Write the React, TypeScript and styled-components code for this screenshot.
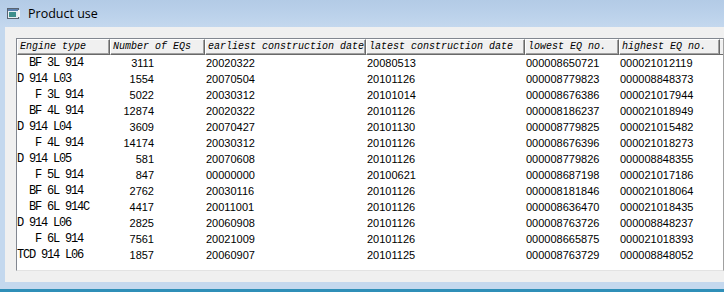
import React from 'react'
import styled, { createGlobalStyle } from 'styled-components'

const GlobalStyle = createGlobalStyle`
  html, body { margin: 0; padding: 0; }
  body { width: 724px; height: 292px; overflow: hidden; background: #c4d8ee; }
`

type Row = [string, string, string, string, string, string]

const columns = [
  { title: 'Engine type', width: 93 },
  { title: 'Number of EQs', width: 95 },
  { title: 'earliest construction date', width: 161 },
  { title: 'latest construction date', width: 159 },
  { title: 'lowest EQ no.', width: 94 },
  { title: 'highest EQ no.', width: 101 },
]

const rows: Row[] = [
  ['  BF 3L 914', '3111', '20020322', '20080513', '000008650721', '000021012119'],
  ['D 914 L03', '1554', '20070504', '20101126', '000008779823', '000008848373'],
  ['   F 3L 914', '5022', '20030312', '20101014', '000008676386', '000021017944'],
  ['  BF 4L 914', '12874', '20020322', '20101126', '000008186237', '000021018949'],
  ['D 914 L04', '3609', '20070427', '20101130', '000008779825', '000021015482'],
  ['   F 4L 914', '14174', '20030312', '20101126', '000008676396', '000021018273'],
  ['D 914 L05', '581', '20070608', '20101126', '000008779826', '000008848355'],
  ['   F 5L 914', '847', '00000000', '20100621', '000008687198', '000021017186'],
  ['  BF 6L 914', '2762', '20030116', '20101126', '000008181846', '000021018064'],
  ['  BF 6L 914C', '4417', '20011001', '20101126', '000008636470', '000021018435'],
  ['D 914 L06', '2825', '20060908', '20101126', '000008763726', '000008848237'],
  ['   F 6L 914', '7561', '20021009', '20101126', '000008665875', '000021018393'],
  ['TCD 914 L06', '1857', '20060907', '20101125', '000008763729', '000008848052'],
]

const gridCols = columns.map((c) => `${c.width}px`).join(' ') + ' 1fr'

export default function App() {
  return (
    <>
      <GlobalStyle />
      <Window>
        <TitleBar>
          <TitleIcon>
            <svg width="13" height="12" viewBox="0 0 13 12">
              <rect x="0.5" y="0.5" width="11" height="10" fill="#e8eef4" stroke="#5a6470" />
              <rect x="1" y="1" width="10" height="2" fill="#5b7fae" />
              <rect x="2" y="4" width="7" height="5" fill="#3f8f8c" />
              <rect x="11" y="2" width="2" height="7" fill="#f4f4f4" />
            </svg>
          </TitleIcon>
          <Title>Product use</Title>
        </TitleBar>
        <Frame>
          <Client>
            <ListBox>
              <HeaderRow>
                {columns.map((c) => (
                  <HeaderCell key={c.title}>{c.title}</HeaderCell>
                ))}
                <HeaderFiller />
              </HeaderRow>
              {rows.map((r) => (
                <DataRow key={r[0]}>
                  <EngineCell>{r[0]}</EngineCell>
                  <CountCell>{r[1]}</CountCell>
                  <Cell>{r[2]}</Cell>
                  <Cell>{r[3]}</Cell>
                  <Cell>{r[4]}</Cell>
                  <Cell>{r[5]}</Cell>
                  <Cell />
                </DataRow>
              ))}
            </ListBox>
          </Client>
        </Frame>
      </Window>
    </>
  )
}

const Window = styled.div`
  width: 724px;
  height: 292px;
  display: flex;
  flex-direction: column;
  background: #c4d8ee;
  border-bottom: 3px solid #2f8fb8;
  box-sizing: border-box;
`

const TitleBar = styled.div`
  height: 27px;
  flex: none;
  display: flex;
  align-items: center;
  gap: 8px;
  padding-left: 7px;
  background: linear-gradient(to bottom, #b3cbe6 0%, #bcd2eb 60%, #c4d8ee 100%);
`

const TitleIcon = styled.div`
  width: 13px;
  height: 12px;
  display: flex;
  margin-top: 1px;
`

const Title = styled.span`
  font-family: 'Open Sans', 'Noto Sans', sans-serif;
  font-size: 12.5px;
  color: #000;
`

const Frame = styled.div`
  flex: 1;
  display: flex;
  padding: 0 0 7px 5px;
  min-height: 0;
`

const Client = styled.div`
  flex: 1;
  background: #f0f0f0;
  padding: 11px 0 11px 11px;
  display: flex;
  min-width: 0;
`

const ListBox = styled.div`
  flex: 1;
  background: #fff;
  border-top: 1px solid #828790;
  border-left: 1px solid #828790;
  border-right: 1px solid #a0a0a0;
  border-bottom: 1px solid #e3e3e3;
  overflow: hidden;
`

const HeaderRow = styled.div`
  display: grid;
  grid-template-columns: ${gridCols};
  height: 16px;
`

const HeaderCell = styled.div`
  background: #f0f0f0;
  border-top: 1px solid #fff;
  border-left: 1px solid #fff;
  border-right: 1px solid #696969;
  border-bottom: 1px solid #696969;
  box-shadow: inset -1px -1px 0 #a0a0a0;
  padding-left: 2px;
  font-family: 'Liberation Mono', monospace;
  font-style: italic;
  font-size: 10px;
  line-height: 13px;
  white-space: nowrap;
  overflow: hidden;
  color: #000;
`

const HeaderFiller = styled.div`
  background: #f0f0f0;
  border-top: 1px solid #fff;
  border-bottom: 1px solid #696969;
`

const DataRow = styled.div`
  display: grid;
  grid-template-columns: ${gridCols};
  height: 16px;
  line-height: 16px;
`

const Cell = styled.div`
  font-family: 'Liberation Sans', Arial, sans-serif;
  font-size: 11px;
  color: #000;
  white-space: nowrap;
  padding-left: 1px;
`

const EngineCell = styled(Cell)`
  font-family: 'Liberation Mono', monospace;
  font-size: 12px;
  letter-spacing: -1.2px;
  white-space: pre;
  padding-left: 0;
`

const CountCell = styled(Cell)`
  text-align: right;
  padding-right: 51px;
`
